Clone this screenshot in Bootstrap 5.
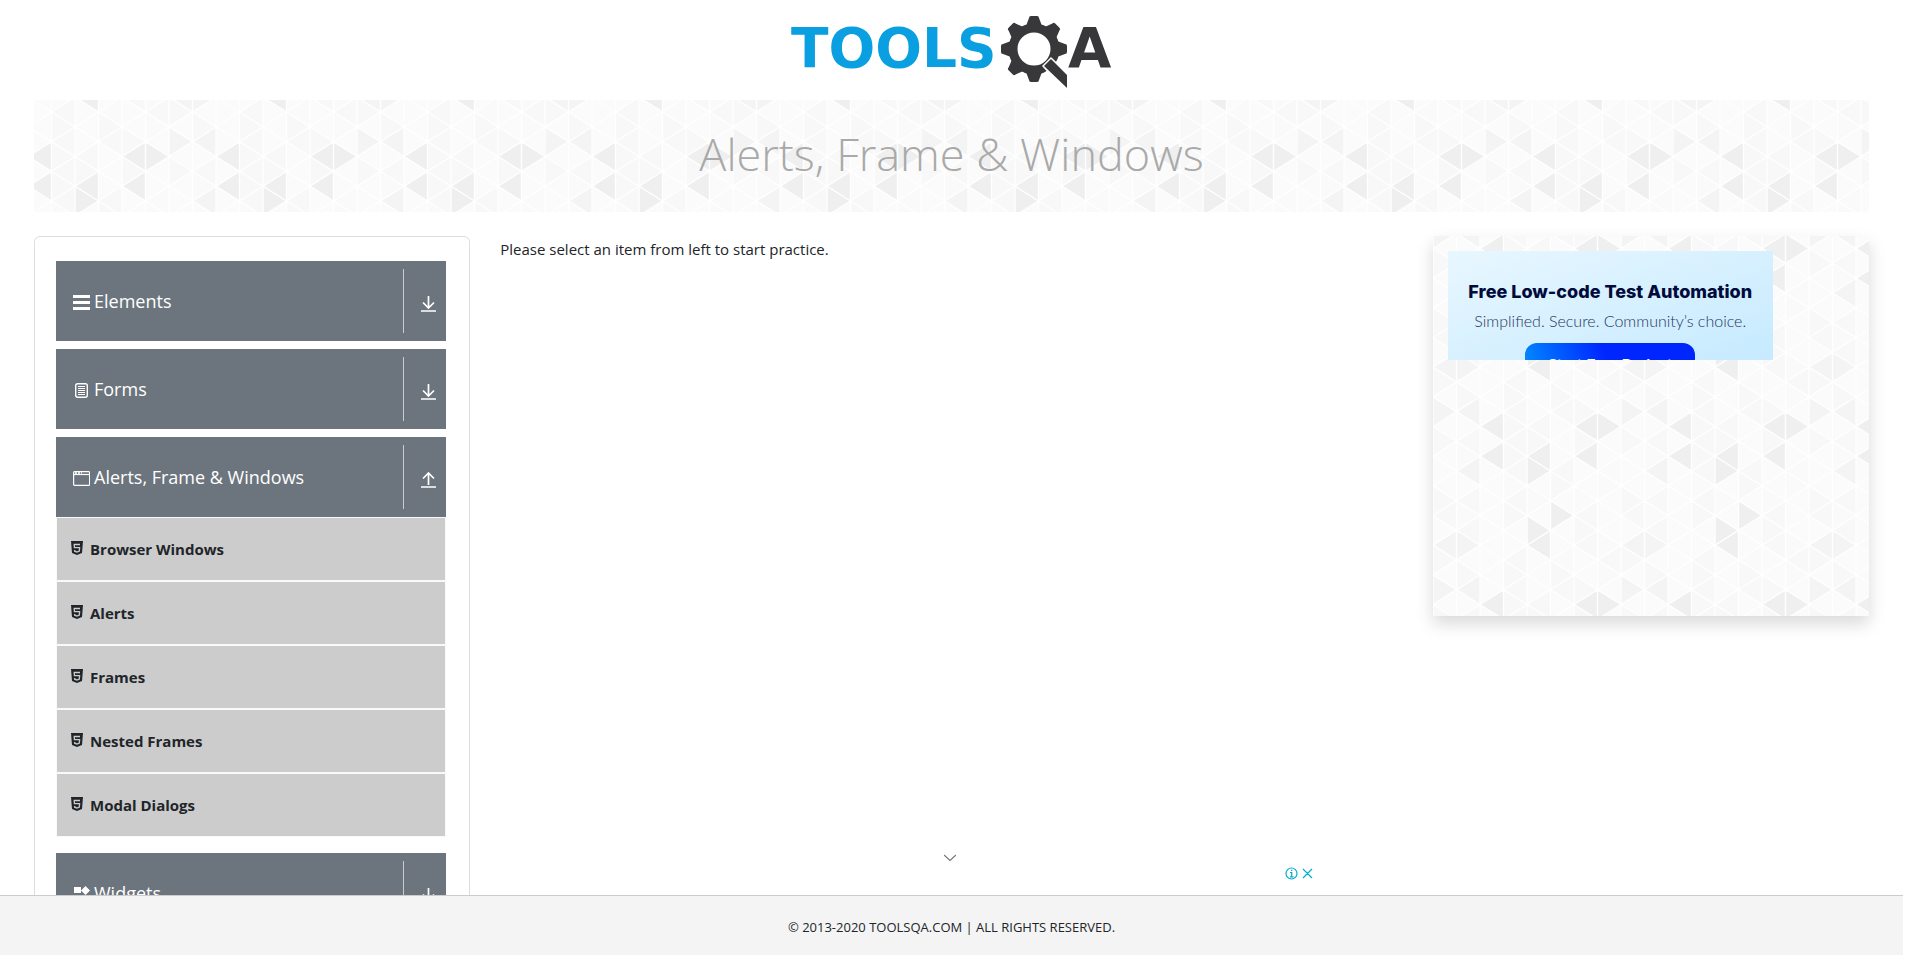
<!DOCTYPE html>
<html lang="en">
<head>
<meta charset="utf-8">
<meta name="viewport" content="width=device-width, initial-scale=1">
<title>ToolsQA</title>
<link href="https://cdn.jsdelivr.net/npm/bootstrap@5.3.0/dist/css/bootstrap.min.css" rel="stylesheet">
<style>
:root {
  --tri: url("data:image/svg+xml,%3Csvg xmlns='http://www.w3.org/2000/svg' xmlns:xlink='http://www.w3.org/1999/xlink' width='188' height='178' viewBox='0 0 188 178'%3E%3Crect width='188' height='178' fill='%23fbfbfb'/%3E%3Cg transform='translate(0 12.5) scale(23.5 14.833)'%3E%3Cg id='t'%3E%3Cpath fill='%23efefef' d='M2 0l1-1v2zM6 0l1-1v2zM8 0l-1-1v2zM2 2l1-1v2zM4 2l1-1v2zM6 2l1-1v2zM5 3l-1-1v2zM6 6l-1-1v2zM5 7l-1-1v2zM4 8l1-1v2z'/%3E%3Cpath fill='%23f4f4f4' d='M1 3l1-1v2zM0 8l1-1v2zM2 8l-1-1v2zM1 11l-1-1v2zM1 11l1-1v2z'/%3E%3Cpath fill='%23f8f8f8' d='M1 7l1-1v2zM1 5l1-1v2zM3 1l1-1v2zM5 1l-1-1v2zM4 0l-1-1v2zM4 0l1-1v2zM1 1l1-1v2zM7 1l-1-1v2zM1 1l-1-1v2zM4 2l-1-1v2zM3 3l1-1v2zM5 3l1-1v2zM1 5l-1-1v2zM3 5l1-1v2zM6 4l-1-1v2zM4 6l-1-1v2zM6 6l1-1v2zM0 6l1-1v2zM7 7l-1-1v2zM3 11l1-1v2zM5 11l1-1v2zM3 9l1-1v2zM6 10l-1-1v2zM4 10l-1-1v2zM7 9l1-1v2zM1 9l-1-1v2zM2 10l-1-1v2zM7 11l-1-1v2zM6 8l1-1v2z'/%3E%3Cpath fill='%23fafafa' d='M2 2l-1-1v2zM7 3l1-1v2zM8 4l-1-1v2zM7 5l-1-1v2zM2 6l-1-1v2zM5 9l1-1v2zM8 8l-1-1v2zM5 5l-1-1v2zM8 10l-1-1v2zM4 4l-1-1v2z'/%3E%3C/g%3E%3Cuse xlink:href='%23t' y='-12'/%3E%3Cpath fill='none' stroke='%23fff' stroke-width='1.4' vector-effect='non-scaling-stroke' d='M0-2v16M1-2v16M2-2v16M3-2v16M4-2v16M5-2v16M6-2v16M7-2v16M8-2v16M0-8l8 8M0-6l8 8M0-4l8 8M0-2l8 8M0 0l8 8M0 2l8 8M0 4l8 8M0 6l8 8M0 8l8 8M0 10l8 8M0 0l8-8M0 2l8-8M0 4l8-8M0 6l8-8M0 8l8-8M0 10l8-8M0 12l8-8M0 14l8-8M0 16l8-8M0 18l8-8M0 20l8-8'/%3E%3C/g%3E%3C/svg%3E");
}
body { font-family: "Open Sans", "Noto Sans", sans-serif; font-size: 15px; line-height: 24px; color: #212529; height: 100vh; padding-right: 17px; }
.page { padding: 0 34px; }
.site-logo { height: 100px; padding-top: 14px; }
.banner { height: 112px; padding-bottom: 4px; background: var(--tri) calc(50% + 63px) calc(50% + 77px); margin-bottom: 24px; }
.banner h1 { font-size: 45px; font-weight: 300; line-height: 60px; color: #a9a9a9; margin: 0; }
.main-row { --bs-gutter-x: 30px; }
.prompt { padding-top: 1px; }
.side { border: 1px solid #dedede; border-radius: 6px; padding: 24px 23px 24px 21px; min-height: 800px; }
.group-head { height: 80px; padding: 8px 9px 8px 16px; background: #6c757d; color: #fff; font-size: 18px; border: 0; width: 100%; text-align: left; }
.group-head .arrow { border-left: 1px solid #c8ccd0; padding-left: 16px; padding-top: 6px; }
.group + .group { margin-top: 8px; }
.group.open + .group { margin-top: 16px; }
.sub a { display: flex; align-items: center; gap: 7px; height: 64px; padding: 0 14px; background: #ccc; border: 1px solid #f8f9fa; color: #212529; font-weight: 700; text-decoration: none; }
.ad-panel { height: 380px; padding: 15px; background: var(--tri); box-shadow: 0 8px 16px rgba(0,0,0,.15); }
.ad-box { width: 325px; height: 109px; overflow: hidden; background: linear-gradient(160deg, #e8f7ff, #c6eaff); font-family: Lato, sans-serif; padding-top: 28px; }
.ad-title { font-family: Inter, sans-serif; font-size: 18px; line-height: 26px; font-weight: 800; color: #000b3c; }
.ad-text { font-size: 16px; line-height: 24px; margin-top: 4px; font-weight: 300; color: #26345c; }
.ad-btn { width: 170px; height: 42px; margin-top: 10px; padding: 0; border: 0; border-radius: 12px; background: linear-gradient(65deg, #0095ff, #0026ff 50%); color: #fff; font-size: 16px; line-height: 20px; font-weight: 700; }
.foot { height: 60px; margin-right: 17px; background: #f4f4f4; border-top: 1px solid #ccc; font-size: 13px; padding-top: 2px; }
.anchor-ad { bottom: 60px; height: 46px; }
.anchor-ad button { position: absolute; border: 0; padding: 0; background: none; line-height: 0; }
.fold { left: 944px; top: 5px; }
.marks { left: 1285px; top: 18px; }
</style>
</head>
<body class="overflow-hidden">
<div class="page">
  <header class="site-logo text-center">
    <a href="#" aria-label="TOOLSQA">
      <svg width="322" height="78" viewBox="-2 0 322 78">
        <g font-family="DejaVu Sans, sans-serif" font-weight="700">
          <text x="-2" y="53" font-size="55" fill="#0a9fe0">TOOLS</text>
          <text x="275" y="53" font-size="56" fill="#38383a">A</text>
        </g>
        <g fill="#38383a">
          <g transform="translate(241 35)">
            <circle r="21" fill="none" stroke="#38383a" stroke-width="9"/>
            <path id="tooth" d="M-8-23L-5-31Q-5-33-3-33H3Q5-33 5-31L8-23z"/>
            <use href="#tooth" transform="rotate(45)"/><use href="#tooth" transform="rotate(90)"/><use href="#tooth" transform="rotate(180)"/><use href="#tooth" transform="rotate(225)"/><use href="#tooth" transform="rotate(270)"/><use href="#tooth" transform="rotate(315)"/>
            <path fill="#fff" d="M8 17L17 8L38 28V50z"/>
            <path d="M10 17L17 10L33 26V39z"/>
          </g>
        </g>
      </svg>
    </a>
  </header>
  <div class="banner d-flex align-items-center justify-content-center"><h1>Alerts, Frame &amp; Windows</h1></div>
  <div class="row main-row">
    <aside class="col-3">
      <nav class="side">
        <div class="group">
          <button class="group-head d-flex justify-content-between" type="button">
            <span class="d-flex align-items-center gap-1 h-100"><svg width="18" height="18" viewBox="0 0 18 18" fill="#fff"><path d="M1 3h17v3H1zM1 9h17v3H1zM1 15h17v3H1z"/></svg>Elements</span>
            <span class="arrow d-flex align-items-center h-100"><svg width="17" height="17" viewBox="0 0 17 17" fill="none" stroke="#fff" stroke-width="1.7"><path d="M8.500 0v12M3 6.500l5.500 5.500 5.500-5.500M1 15h15"/></svg></span>
          </button>
        </div>
        <div class="group">
          <button class="group-head d-flex justify-content-between" type="button">
            <span class="d-flex align-items-center gap-1 h-100"><svg width="18" height="18" viewBox="0 0 18 18" fill="none" stroke="#fff"><rect x="3.700" y="3.700" width="11.600" height="13.600" rx="2" stroke-width="1.400"/><path d="M6 6.500h7M6 8.500h7M6 10.500h7M6 12.500h7M6 14.500h7" stroke-width="1"/></svg>Forms</span>
            <span class="arrow d-flex align-items-center h-100"><svg width="17" height="17" viewBox="0 0 17 17" fill="none" stroke="#fff" stroke-width="1.7"><path d="M8.500 0v12M3 6.500l5.500 5.500 5.500-5.500M1 15h15"/></svg></span>
          </button>
        </div>
        <div class="group open">
          <button class="group-head d-flex justify-content-between" type="button" aria-expanded="true">
            <span class="d-flex align-items-center gap-1 h-100"><svg width="18" height="18" viewBox="0 0 18 18" fill="none" stroke="#fff"><rect x="1.600" y="3.600" width="16" height="13.800" rx="1" stroke-width="1.200"/><path d="M2 6.500h15" stroke-width="1.200"/><path d="M3 5h7" stroke-dasharray="2 1" stroke-width="1.500"/></svg>Alerts, Frame &amp; Windows</span>
            <span class="arrow d-flex align-items-center h-100"><svg width="17" height="17" viewBox="0 0 17 17" fill="none" stroke="#fff" stroke-width="1.7"><path d="M8.500 13V1M3 6.500L8.500 1 14 6.500M1 15h15"/></svg></span>
          </button>
          <div class="sub">
            <a href="#"><svg width="12" height="17" viewBox="0 0 12 17"><path fill="#212529" d="M0 0h12l-1 12-5 2-5-2z"/><path fill="none" stroke="#ccc" stroke-width="1.300" d="M9 3.500H3.200l.2 3.200h5.200l-.3 3.300L6 11l-2.300-.8V9"/></svg>Browser Windows</a>
            <a href="#"><svg width="12" height="17" viewBox="0 0 12 17"><path fill="#212529" d="M0 0h12l-1 12-5 2-5-2z"/><path fill="none" stroke="#ccc" stroke-width="1.300" d="M9 3.500H3.200l.2 3.200h5.200l-.3 3.300L6 11l-2.300-.8V9"/></svg>Alerts</a>
            <a href="#"><svg width="12" height="17" viewBox="0 0 12 17"><path fill="#212529" d="M0 0h12l-1 12-5 2-5-2z"/><path fill="none" stroke="#ccc" stroke-width="1.300" d="M9 3.500H3.200l.2 3.200h5.200l-.3 3.300L6 11l-2.300-.8V9"/></svg>Frames</a>
            <a href="#"><svg width="12" height="17" viewBox="0 0 12 17"><path fill="#212529" d="M0 0h12l-1 12-5 2-5-2z"/><path fill="none" stroke="#ccc" stroke-width="1.300" d="M9 3.500H3.200l.2 3.200h5.200l-.3 3.300L6 11l-2.300-.8V9"/></svg>Nested Frames</a>
            <a href="#"><svg width="12" height="17" viewBox="0 0 12 17"><path fill="#212529" d="M0 0h12l-1 12-5 2-5-2z"/><path fill="none" stroke="#ccc" stroke-width="1.300" d="M9 3.500H3.200l.2 3.200h5.200l-.3 3.300L6 11l-2.300-.8V9"/></svg>Modal Dialogs</a>
          </div>
        </div>
        <div class="group">
          <button class="group-head d-flex justify-content-between" type="button">
            <span class="d-flex align-items-center gap-1 h-100"><svg width="18" height="18" viewBox="0 0 18 18" fill="#fff"><path d="M2 3h7v6H2zM13.500 2l4.500 4.500-4.500 4.500L9 6.500zM2 11h7v6H2zM11 11h6v6h-6z"/></svg>Widgets</span>
            <span class="arrow d-flex align-items-center h-100"><svg width="17" height="17" viewBox="0 0 17 17" fill="none" stroke="#fff" stroke-width="1.7"><path d="M8.500 0v12M3 6.500l5.500 5.500 5.500-5.500M1 15h15"/></svg></span>
          </button>
        </div>
      </nav>
    </aside>
    <main class="col-6 prompt">Please select an item from left to start practice.</main>
    <aside class="col-3">
      <div class="ad-panel">
        <div class="ad-box text-center">
          <div class="ad-title">Free Low-code Test Automation</div>
          <div class="ad-text">Simplified. Secure. Community’s choice.</div>
          <button class="ad-btn" type="button">Start Free Project</button>
        </div>
      </div>
    </aside>
  </div>
</div>
<div class="anchor-ad position-fixed start-0 w-100">
  <button class="fold" type="button" aria-label="Collapse"><svg width="12" height="8" viewBox="0 0 12 8" fill="none" stroke="#777" stroke-width="1.200"><path d="M0 1l6 5.500L12 1"/></svg></button>
  <button class="marks" type="button" aria-label="Ad choices"><svg width="28" height="14" viewBox="0 0 28 14" fill="none" stroke="#00aecd" stroke-width="1.200"><circle cx="6.500" cy="6.500" r="5.500"/><path d="M5 5.500h1.700v4M5 9.800h3.500M6 3.300h1.400M18 2l9 9M27 2l-9 9"/></svg></button>
</div>
<footer class="foot fixed-bottom d-flex align-items-center justify-content-center">© 2013-2020 TOOLSQA.COM | ALL RIGHTS RESERVED.</footer>
<script src="https://cdn.jsdelivr.net/npm/bootstrap@5.3.0/dist/js/bootstrap.bundle.min.js"></script>
</body>
</html>
